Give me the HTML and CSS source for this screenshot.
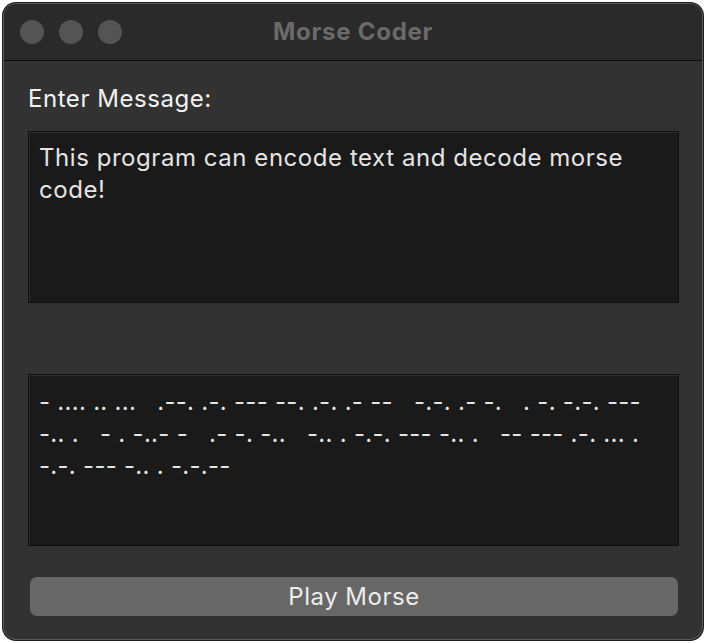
FILE: index.html
```html
<!DOCTYPE html>
<html>
<head>
<meta charset="utf-8">
<link rel="stylesheet" href="styles.css">
</head>
<body>
<div class="window">
  <div class="titlebar">
    <div class="lights">
      <span class="light"></span>
      <span class="light"></span>
      <span class="light"></span>
    </div>
    <div class="title">Morse Coder</div>
  </div>
  <div class="content">
    <div class="label">Enter Message:</div>
    <div class="field">This program can encode text and decode morse code!</div>
    <div class="field morse">- .... .. ...   .--. .-. --- --. .-. .- --   -.-. .- -.   . -. -.-. ---<br>-.. .   - . -..- -   .- -. -..   -.. . -.-. --- -.. .   -- --- .-. ... .<br>-.-. --- -.. . -.-.--</div>
    <div class="button">Play Morse</div>
  </div>
</div>
</body>
</html>
```
FILE: styles.css
```css
html, body {
  margin: 0;
  padding: 0;
  background: #ffffff;
}
body {
  padding: 3px 4px 3px 3px;
  font-family: Inter, "Noto Sans", sans-serif;
}
.window {
  width: 700px;
  height: 637px;
  box-sizing: border-box;
  border-radius: 13px;
  background: #323232;
  border: 1px solid #5a5a5a;
  box-shadow: 0 0 0 1px #1e1e1e;
  overflow: hidden;
  display: flex;
  flex-direction: column;
}
.titlebar {
  height: 56px;
  background: #2a2a2a;
  border-bottom: 1px solid #0c0c0c;
  position: relative;
  display: flex;
  align-items: center;
  justify-content: center;
  flex: none;
}
.lights {
  position: absolute;
  left: 16px;
  top: 16px;
  display: flex;
  gap: 15px;
}
.light {
  width: 24px;
  height: 24px;
  border-radius: 50%;
  background: #545454;
}
.title {
  color: #6a6a6a;
  font-weight: 700;
  font-size: 24px;
  letter-spacing: 0.75px;
  margin-top: -2px;
}
.content {
  padding: 24px 23px 0 24px;
  display: flex;
  flex-direction: column;
}
.label {
  color: #f2f2f2;
  font-size: 24px;
  line-height: 28px;
  height: 28px;
  margin-bottom: 18px;
  letter-spacing: 0.55px;
}
.field {
  height: 172px;
  box-sizing: border-box;
  background: #1a1a1a;
  border: 1px solid #0f0f0f;
  box-shadow: inset 1px 1px 0 #2e2e2e;
  padding: 10px 10px;
  color: #e4e4e4;
  font-size: 24px;
  line-height: 32px;
  letter-spacing: 0.55px;
}
.morse {
  margin-top: 71px;
  white-space: pre;
  font-size: 24px;
  letter-spacing: 0.28px;
  padding-top: 11px;
}
.button {
  margin: 31px 1px 0 2px;
  height: 39px;
  border-radius: 7px;
  background: #676767;
  color: #ececec;
  font-size: 24px;
  letter-spacing: 0.5px;
  display: flex;
  align-items: center;
  justify-content: center;
}
```
